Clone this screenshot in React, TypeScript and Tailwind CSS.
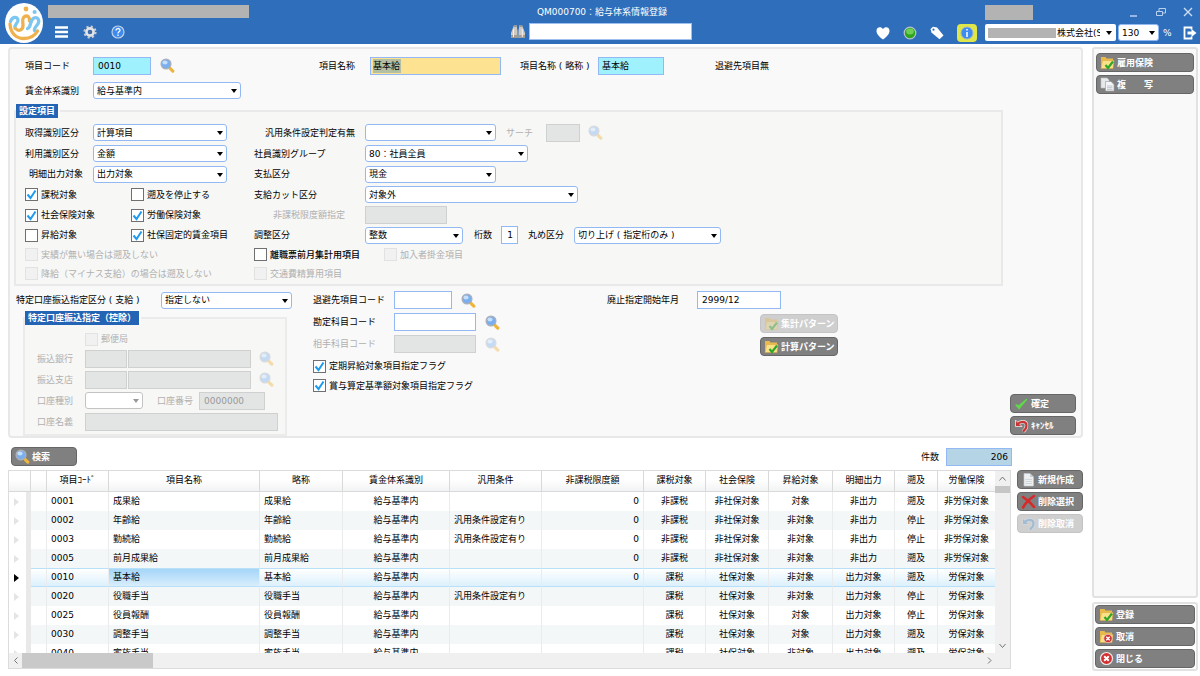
import { useId } from "react";
import clsx from "clsx";

type IconProps = { className?: string };

function Logo() {
    return (
        <svg viewBox="0 0 38 40" className="h-10 w-[38px] shrink-0">
            <ellipse cx="19" cy="20" rx="19" ry="20" fill="#fff" />
            <circle cx="21" cy="6" r="2.4" fill="#efb04e" />
            <circle cx="29.6" cy="9" r="2.1" fill="#7cc7f2" />
            <g fill="none" strokeWidth="3.3" strokeLinecap="round">
                <path d="M5 21c.5 9.500 6.500 14.500 14 14.500 6 0 11-3 13.500-7.500" stroke="#efb04e" />
                <path d="M5.500 18.500c1.500-5 7-5.500 7.500-1.500.3 3-4 4.500-3 8" stroke="#7cc7f2" />
                <path d="M10.500 25.500c3 3.500 7.500 1.500 7.500-3 0-3.500-1.500-7 1.500-9 3-1.500 5.500.5 5 4.500" stroke="#efb04e" />
                <path d="M22.500 25.500c4-1 2-8.500 6.500-10.500 4.500-1.500 6 3 3.500 6.500-1.500 2-3.500 3.500-3 6" stroke="#7cc7f2" />
            </g>
        </svg>
    );
}

function SearchIcon({ className }: IconProps) {
    return (
        <svg viewBox="0 0 15 15" className={clsx("h-[15px] w-[15px] shrink-0", className)}>
            <circle cx="6" cy="6" r="4.8" fill="#79aef0" stroke="#a9b0bb" strokeWidth="1.500" />
            <ellipse cx="5" cy="4.500" rx="2.600" ry="2" fill="#c3dffb" />
            <path d="M9.500 9.500l1.300 1.300" stroke="#8a8f98" strokeWidth="1.600" />
            <path d="M10.500 10.800l2.300 2.300" stroke="#eeb53a" strokeWidth="3.200" strokeLinecap="round" />
        </svg>
    );
}

function Folder() {
    return (
        <>
            <path d="M1 2h4.500l1 1.500H13V13H1z" fill="#e9b94c" />
            <path d="M2.500 5.500H14L13 13.500H1z" fill="#fbe08a" stroke="#d9a436" strokeWidth=".5" />
        </>
    );
}

function FolderCheckIcon({ className }: IconProps) {
    return (
        <svg viewBox="0 0 15 15" className={clsx("h-[15px] w-[15px] shrink-0", className)}>
            <Folder />
            <path d="M5.500 10l2.500 3 5-6.500" fill="none" stroke="#2fa82a" strokeWidth="2.200" />
        </svg>
    );
}

function FolderCancelIcon({ className }: IconProps) {
    return (
        <svg viewBox="0 0 15 15" className={clsx("h-[15px] w-[15px] shrink-0", className)}>
            <Folder />
            <circle cx="9" cy="9.500" r="4.200" fill="#cf3535" stroke="#e9dede" strokeWidth=".7" />
            <path d="M7.300 7.800l3.400 3.400M10.700 7.800l-3.400 3.400" stroke="#fff" strokeWidth="1.300" />
        </svg>
    );
}

function CopyIcon({ className }: IconProps) {
    return (
        <svg viewBox="0 0 15 15" className={clsx("h-[15px] w-[15px] shrink-0", className)}>
            <path d="M1 1h6l2 2v8H1z" fill="#e6e8ea" stroke="#bfc3c7" strokeWidth=".6" />
            <path d="M5.500 4.500h5.500l3 3V14H5.500z" fill="#f4f5f6" stroke="#9da2a7" strokeWidth=".7" />
            <path d="M7 9h5.500M7 10.700h5.500M7 12.400h5.500" stroke="#aab0b6" strokeWidth=".7" />
        </svg>
    );
}

function PageIcon({ className }: IconProps) {
    return (
        <svg viewBox="0 0 15 15" className={clsx("h-[15px] w-[15px] shrink-0", className)}>
            <path d="M3 1.500h6l3.500 3.500v9H3z" fill="#edf0f1" stroke="#c5c9cc" strokeWidth=".6" />
            <path d="M9 1.500V5h3.500" fill="#c9ced2" />
            <path d="M4.500 7.500h6.500M4.500 9.500h6.500M4.500 11.500h6.500" stroke="#c4cacf" strokeWidth=".7" />
        </svg>
    );
}

function CheckIcon({ className }: IconProps) {
    return (
        <svg viewBox="0 0 15 15" className={clsx("h-[15px] w-[15px] shrink-0", className)}>
            <path d="M2 9l3 3.500L12.500 3.500 5 9.800z" fill="#5fd84a" stroke="#5fd84a" strokeWidth="1.300" strokeLinejoin="round" />
        </svg>
    );
}

function UndoIcon({ className }: IconProps) {
    return (
        <svg viewBox="0 0 15 15" className={clsx("h-[15px] w-[15px] shrink-0", className)}>
            <path d="M3 6.500c4-4 9.500-3.500 9.500 1 0 2.500-1.500 4.500-3.500 6" fill="none" stroke="#eee" strokeWidth="3.400" />
            <path d="M1.500 2v6.500H8z" fill="currentColor" stroke="#eee" strokeWidth=".8" />
            <path d="M3 6.500c4-4 9.500-3.500 9.500 1 0 2.500-1.500 4.500-3.500 6" fill="none" stroke="currentColor" strokeWidth="2.200" />
        </svg>
    );
}

function DeleteIcon({ className }: IconProps) {
    return (
        <svg viewBox="0 0 15 15" className={clsx("h-[15px] w-[15px] shrink-0", className)}>
            <path d="M2 3c4 2.500 8 6 11 10M13 2C8.500 5 4.500 9 2 13.500" fill="none" stroke="#d62a2a" strokeWidth="2.600" strokeLinecap="round" />
        </svg>
    );
}

function CloseIcon({ className }: IconProps) {
    return (
        <svg viewBox="0 0 15 15" className={clsx("h-[15px] w-[15px] shrink-0", className)}>
            <circle cx="7.500" cy="7.500" r="6" fill="#d22f2f" stroke="#ececec" strokeWidth="1.200" />
            <path d="M5.200 5.200l4.600 4.600M9.800 5.200L5.200 9.800" stroke="#fff" strokeWidth="2" />
        </svg>
    );
}

function MenuIcon() {
    return (
        <svg viewBox="0 0 14 12" className="h-3 w-3.5">
            <path d="M0 1.500h13M0 6h13M0 10.500h13" stroke="#fff" strokeWidth="2.400" />
        </svg>
    );
}

function GearIcon() {
    return (
        <svg viewBox="0 0 14 14" className="h-3.5 w-3.5">
            <circle cx="7" cy="7" r="5.600" fill="none" stroke="#c9ccd0" strokeWidth="2" strokeDasharray="2.200 2.200" />
            <circle cx="7" cy="7" r="3.600" fill="none" stroke="#e3e4e6" strokeWidth="2.600" />
            <circle cx="7" cy="7" r="1.600" fill="#4a6c96" />
        </svg>
    );
}

function HelpIcon() {
    return (
        <svg viewBox="0 0 14 14" className="h-3.5 w-3.5">
            <circle cx="7" cy="7" r="6" fill="#3d8af0" stroke="#c3d2e6" strokeWidth="1.200" />
            <path d="M5 5.500c0-2.600 4-2.600 4-.2 0 1.600-2 1.500-2 3.200M7 9.600v1.400" fill="none" stroke="#fff" strokeWidth="1.300" />
        </svg>
    );
}

function BinocularsIcon() {
    return (
        <svg viewBox="0 0 16 16" className="h-4 w-4 shrink-0">
            <path d="M4 1h2.500l1 6v7H1V9z" fill="#cfc9c2" />
            <path d="M12 1H9.500l-1 6v7H15V9z" fill="#cfc9c2" />
            <path d="M4 1h2.500v2H4zM9.500 1H12v2H9.500z" fill="#9a9590" />
            <path d="M1 11h6.500v3H1zM8.500 11H15v3H8.500z" fill="#a39d96" />
            <path d="M3.500 5v8M12.300 5v8" stroke="#f3f0ec" />
        </svg>
    );
}

function HeartIcon() {
    return (
        <svg viewBox="0 0 14 14" className="h-3.5 w-3.5">
            <path d="M7 13.500C2 9.500 .5 7.500.5 4.700.5 1 5.200.2 7 3.200 8.800.2 13.500 1 13.500 4.700c0 2.800-1.500 4.800-6.500 8.800z" fill="#fff" />
        </svg>
    );
}

function StatusIcon() {
    return (
        <svg viewBox="0 0 14 14" className="h-3.5 w-3.5">
            <circle cx="7" cy="7" r="5.800" fill="#2fa51e" stroke="#b9c2cf" strokeWidth="1.200" />
            <ellipse cx="7" cy="5.500" rx="3.800" ry="3" fill="#6fce55" />
        </svg>
    );
}

function TagIcon() {
    return (
        <svg viewBox="0 0 14 14" className="h-3.5 w-3.5">
            <path d="M.5 3L3 .8l4 .7 6.500 8-4 3.800L1.500 6.500z" fill="#fff" />
            <circle cx="3.500" cy="3.700" r="1.100" fill="#2f6ebb" />
        </svg>
    );
}

function InfoIcon() {
    return (
        <svg viewBox="0 0 14 14" className="h-3.5 w-3.5">
            <circle cx="7" cy="7" r="6" fill="#3f8cf0" stroke="#9cb2cc" />
            <path d="M7 6v5M7 3v1.600" stroke="#fff" strokeWidth="1.500" />
        </svg>
    );
}

function ExitIcon() {
    return (
        <svg viewBox="0 0 14 14" className="h-3.5 w-3.5">
            <path d="M8.500 3.500V1.500H1.500v11h7v-2" fill="none" stroke="#fff" strokeWidth="1.800" />
            <path d="M4.500 5.500H8.500V3l5 4-5 4V8.500h-4z" fill="#fff" />
        </svg>
    );
}

type ActionButtonProps = {
    icon: React.ElementType;
    label: string;
    disabled?: boolean;
    className?: string;
    iconClassName?: string;
};

function ActionButton({ icon: Icon, label, disabled, className, iconClassName }: ActionButtonProps) {
    return (
        <button
            type="button"
            disabled={disabled}
            className={clsx(
                "flex h-[19px] shrink-0 items-center gap-0.5 rounded-[4px] border pl-[3px] font-bold whitespace-pre text-white",
                disabled ? "border-[#c4c4c4] bg-[#cfcfcf]" : "border-[#666] bg-[#808080]",
                className,
            )}
        >
            <Icon className={clsx(iconClassName, disabled && "opacity-40")} />
            {label}
        </button>
    );
}

function SearchButton({ disabled, className }: { disabled?: boolean; className?: string }) {
    return (
        <button type="button" aria-label="検索" disabled={disabled} className={clsx("shrink-0", disabled && "opacity-40", className)}>
            <SearchIcon />
        </button>
    );
}

type SelectProps = { id?: string; label?: string; value: string; className?: string; disabled?: boolean };

function Select({ id, label, value, className, disabled }: SelectProps) {
    return (
        <span className={clsx("relative h-[17px] shrink-0", className)}>
            <select
                id={id}
                aria-label={label}
                disabled={disabled}
                className={clsx(
                    "block h-full w-full appearance-none rounded-[3px] border bg-white pr-3 pl-[3px]",
                    disabled ? "border-[#c3c3c3]" : "border-[#93b9f5]",
                )}
            >
                <option>{value}</option>
            </select>
            <svg viewBox="0 0 6 4" className="pointer-events-none absolute top-[7px] right-1 h-1 w-1.5">
                <path d="M0 0h6L3 4z" fill={disabled ? "#999" : "#000"} />
            </svg>
        </span>
    );
}

type TextBoxProps = { id?: string; label?: string; value?: string; className?: string; disabled?: boolean };

function TextBox({ id, label, value = "", className, disabled }: TextBoxProps) {
    return (
        <input
            id={id}
            aria-label={label}
            defaultValue={value}
            disabled={disabled}
            className={clsx(
                "h-[18px] min-w-0 shrink-0 border",
                disabled ? "border-[#cfd1d1] bg-[#e3e5e4] px-1 text-[#999]" : "border-[#93b9f5]",
                className,
            )}
        />
    );
}

type FieldProps = { label: string; value: string; labelClass: string; selectClass: string; disabled?: boolean };

function SelectField({ label, value, labelClass, selectClass, disabled }: FieldProps) {
    const id = useId();
    return (
        <>
            <label htmlFor={id} className={clsx("shrink-0", labelClass)}>
                {label}
            </label>
            <Select id={id} value={value} className={selectClass} disabled={disabled} />
        </>
    );
}

type TextFieldProps = { label: string; value?: string; labelClass: string; inputClass: string; disabled?: boolean };

function TextField({ label, value, labelClass, inputClass, disabled }: TextFieldProps) {
    const id = useId();
    return (
        <>
            <label htmlFor={id} className={clsx("shrink-0", disabled && "text-[#b0b0b0]", labelClass)}>
                {label}
            </label>
            <TextBox id={id} value={value} className={inputClass} disabled={disabled} />
        </>
    );
}

type CheckProps = { label: string; checked?: boolean; disabled?: boolean; className?: string };

function Check({ label, checked, disabled, className }: CheckProps) {
    return (
        <label className={clsx("relative flex shrink-0 items-center gap-[3px]", disabled && "text-[#b0b0b0]", className)}>
            <input
                type="checkbox"
                defaultChecked={checked}
                disabled={disabled}
                className={clsx(
                    "peer h-[13px] w-[13px] shrink-0 appearance-none border",
                    disabled ? "border-[#e2e2e2] bg-[#f1f1f1]" : "border-[#707070] bg-white",
                )}
            />
            <svg viewBox="0 0 13 13" className="pointer-events-none absolute left-0 hidden h-[13px] w-[13px] peer-checked:block">
                <path d="M2.500 6.500l3 3.500 5-7.500" fill="none" stroke="#1e9bf0" strokeWidth="2" />
            </svg>
            {label}
        </label>
    );
}

function TopBar() {
    return (
        <header className="flex h-11 shrink-0 bg-[#2f6ebb] text-white">
            <div className="flex flex-1 gap-[5px] pt-[3px] pl-[5px]">
                <Logo />
                <div className="pt-[2px]">
                    <div className="h-[13px] w-[201px] bg-[#b3b3b3]" />
                    <nav className="mt-[7px] flex items-center gap-3.5 pl-[7px]">
                        <button type="button" aria-label="メニュー"><MenuIcon /></button>
                        <button type="button" aria-label="設定"><GearIcon /></button>
                        <button type="button" aria-label="ヘルプ"><HelpIcon /></button>
                    </nav>
                </div>
            </div>

            <div className="flex w-[182px] flex-col items-center">
                <h1 className="h-[23px] pl-0.5 leading-[24px]">QM000700：給与体系情報登録</h1>
                <div className="flex w-full items-center gap-[3px]">
                    <BinocularsIcon />
                    <input aria-label="メニュー検索" className="h-[17px] min-w-0 flex-1 border border-[#9dc0f0] bg-white px-1 text-black" />
                </div>
            </div>

            <div className="flex flex-1 flex-col items-end pr-[3px]">
                <div className="flex h-[23px] items-start pt-[5px]">
                    <div className="h-[15px] w-12 bg-[#b3b3b3]" />
                    <div className="ml-24 flex items-center gap-4 pr-1">
                        <button type="button" aria-label="最小化">
                            <svg viewBox="0 0 10 14" className="h-3.5 w-2.5"><path d="M1 11h7" stroke="#b9d0ef" strokeWidth="1.500" /></svg>
                        </button>
                        <button type="button" aria-label="元に戻す">
                            <svg viewBox="0 0 12 14" className="h-3.5 w-3">
                                <path d="M1.500 6.500h6v4h-6zM4 6.500v-3h6.500v4.500h-3" fill="none" stroke="#b9d0ef" />
                            </svg>
                        </button>
                        <button type="button" aria-label="閉じる">
                            <svg viewBox="0 0 10 14" className="h-3.5 w-2.5"><path d="M1 3l8 8M9 3l-8 8" stroke="#cfe0f6" strokeWidth="1.300" /></svg>
                        </button>
                    </div>
                </div>
                <div className="flex h-[19px] items-center">
                    <div className="flex items-center gap-[13px] pr-2">
                        <button type="button" aria-label="お気に入り"><HeartIcon /></button>
                        <button type="button" aria-label="接続状態"><StatusIcon /></button>
                        <button type="button" aria-label="タグ"><TagIcon /></button>
                        <button type="button" aria-label="情報" className="flex h-[18px] w-5 items-center justify-center rounded-[4px] bg-[#dfe64a]">
                            <InfoIcon />
                        </button>
                    </div>
                    <div className="relative h-[17px] w-[131px] rounded-[2px] bg-white text-black">
                        <select aria-label="会社" className="h-full w-full appearance-none pr-4 pl-[72px]">
                            <option>株式会社(S</option>
                        </select>
                        <div className="pointer-events-none absolute top-1 left-[3px] h-2.5 w-[68px] bg-[#b3b3b3]" />
                        <svg viewBox="0 0 6 4" className="pointer-events-none absolute top-[7px] right-1 h-1 w-1.5"><path d="M0 0h6L3 4z" /></svg>
                    </div>
                    <Select label="表示倍率" value="130" className="ml-0.5 w-[41px] text-black" />
                    <span className="w-[24px] pl-1">%</span>
                    <button type="button" aria-label="ログアウト"><ExitIcon /></button>
                </div>
            </div>
        </header>
    );
}

function Legend({ children }: { children: React.ReactNode }) {
    return (
        <legend className="h-3.5 bg-[#2464b4] px-[3px] leading-3.5 font-bold text-white shadow-[2px_0_0_#fafafa]">{children}</legend>
    );
}

function SettingsGroup() {
    return (
        <fieldset className="mt-[5px] mr-[78px] ml-1 border-2 border-[#e9e9e9] bg-[#f7f7f6] pb-px text-black">
            <Legend>設定項目</Legend>
            <div className="pt-1 pl-[9px]">
                <div className="flex h-[21px] items-center">
                    <SelectField label="取得識別区分" value="計算項目" labelClass="w-[68px]" selectClass="w-[134px]" />
                    <SelectField label="汎用条件設定判定有無" value="" labelClass="ml-[27px] w-[111px] pl-[11px]" selectClass="w-[131px]" />
                    <TextField label="サーチ" disabled labelClass="ml-2.5 w-10" inputClass="w-[34px]" />
                    <SearchButton disabled className="ml-2" />
                </div>
                <div className="flex h-[21px] items-center">
                    <SelectField label="利用識別区分" value="金額" labelClass="w-[68px]" selectClass="w-[134px]" />
                    <SelectField label="社員識別グループ" value="80：社員全員" labelClass="ml-[27px] w-[111px]" selectClass="w-[163px]" />
                </div>
                <div className="flex h-5 items-center">
                    <SelectField label="明細出力対象" value="出力対象" labelClass="w-[68px] pl-1" selectClass="w-[134px]" />
                    <SelectField label="支払区分" value="現金" labelClass="ml-[27px] w-[111px]" selectClass="w-[131px]" />
                </div>
                <div className="flex h-[21px] items-center">
                    <Check label="課税対象" checked className="w-[106px]" />
                    <Check label="遡及を停止する" className="w-[123px]" />
                    <SelectField label="支給カット区分" value="対象外" labelClass="w-[111px]" selectClass="w-[213px]" />
                </div>
                <div className="flex h-5 items-center">
                    <Check label="社会保険対象" checked className="w-[106px]" />
                    <Check label="労働保険対象" checked className="w-[123px]" />
                    <TextField label="非課税限度額指定" disabled labelClass="w-[111px] pl-[19px]" inputClass="w-[82px]" />
                </div>
                <div className="flex h-5 items-center">
                    <Check label="昇給対象" className="w-[106px]" />
                    <Check label="社保固定的賃金項目" checked className="w-[123px]" />
                    <SelectField label="調整区分" value="整数" labelClass="w-[111px]" selectClass="w-[98px]" />
                    <TextField label="桁数" value="1" labelClass="ml-[11px] w-[27px]" inputClass="w-[17px] bg-white pr-1 text-right" />
                    <SelectField label="丸め区分" value="切り上げ ( 指定桁のみ )" labelClass="ml-2.5 w-[46px]" selectClass="w-[147px]" />
                </div>
                <div className="flex h-[19px] items-center">
                    <Check label="実績が無い場合は遡及しない" disabled className="w-[229px]" />
                    <Check label="離職票前月集計用項目" className="w-[130px] font-medium" />
                    <Check label="加入者掛金項目" disabled />
                </div>
                <div className="flex h-[19px] items-center">
                    <Check label="降給（マイナス支給）の場合は遡及しない" disabled className="w-[229px]" />
                    <Check label="交通費精算用項目" disabled />
                </div>
            </div>
        </fieldset>
    );
}

function DeductionTransferGroup() {
    return (
        <fieldset disabled className="mt-0.5 ml-[7px] w-[264px] border-2 border-[#ebebeb] bg-[#f7f7f6] pb-0.5 text-[#b0b0b0]">
            <Legend>特定口座振込指定（控除）</Legend>
            <div className="pt-[5px] pl-3">
                <div className="flex h-[18px] items-center pl-12">
                    <Check label="郵便局" disabled />
                </div>
                <div className="flex h-[21px] items-center">
                    <TextField label="振込銀行" disabled labelClass="w-12" inputClass="w-[42px]" />
                    <TextBox label="振込銀行名" disabled className="ml-px w-[123px]" />
                    <SearchButton disabled className="ml-2" />
                </div>
                <div className="flex h-[21px] items-center">
                    <TextField label="振込支店" disabled labelClass="w-12" inputClass="w-[42px]" />
                    <TextBox label="振込支店名" disabled className="ml-px w-[123px]" />
                    <SearchButton disabled className="ml-2" />
                </div>
                <div className="flex h-[21px] items-center">
                    <SelectField label="口座種別" value="" disabled labelClass="w-12" selectClass="w-[58px]" />
                    <TextField label="口座番号" value="0000000" disabled labelClass="ml-3.5 w-[42px]" inputClass="w-[66px]" />
                </div>
                <div className="flex h-[21px] items-center">
                    <TextField label="口座名義" disabled labelClass="w-12" inputClass="w-[193px]" />
                </div>
            </div>
        </fieldset>
    );
}

function ItemForm() {
    return (
        <form className="rounded-[4px] border-2 border-[#e8e8e8] bg-[#f9f9f9] pt-2">
            <div className="flex h-[17px] items-center pl-[15px]">
                <TextField label="項目コード" value="0010" labelClass="w-[68px]" inputClass="w-[58px] bg-[#9ff2fd] px-1" />
                <SearchButton className="ml-[9px]" />
                <TextField
                    label="項目名称"
                    value="基本給"
                    labelClass="ml-[144px] w-[51px]"
                    inputClass="w-[131px] bg-[#fce291] bg-[linear-gradient(#b3bfa2,#b3bfa2)] bg-[length:28px_14px] bg-[position:2px_center] bg-no-repeat px-0.5"
                />
                <TextField label="項目名称 ( 略称 )" value="基本給" labelClass="ml-[19px] w-[78px]" inputClass="w-[66px] bg-[#9ff2fd] px-[3px]" />
                <span className="ml-[51px]">退避先項目無</span>
            </div>
            <div className="mt-2 flex h-[17px] items-center pl-[15px]">
                <SelectField label="賃金体系識別" value="給与基準内" labelClass="w-[68px]" selectClass="w-[148px]" />
            </div>

            <SettingsGroup />

            <div className="flex pl-1.5">
                <div className="w-[297px] shrink-0 pt-[5px]">
                    <div className="flex h-[18px] items-center">
                        <SelectField label="特定口座振込指定区分 ( 支給 )" value="指定しない" labelClass="w-[145px]" selectClass="w-[131px]" />
                    </div>
                    <DeductionTransferGroup />
                </div>

                <div className="w-[294px] shrink-0 pt-[3px]">
                    <div className="flex h-[22px] items-center">
                        <TextField label="退避先項目コード" labelClass="w-[81px]" inputClass="w-[58px] bg-white px-1" />
                        <SearchButton className="ml-[9px]" />
                    </div>
                    <div className="flex h-[22px] items-center">
                        <TextField label="勘定科目コード" labelClass="w-[81px]" inputClass="w-[82px] bg-white px-1" />
                        <SearchButton className="ml-[9px]" />
                    </div>
                    <div className="flex h-[22px] items-center">
                        <TextField label="相手科目コード" disabled labelClass="w-[81px]" inputClass="w-[82px]" />
                        <SearchButton disabled className="ml-[9px]" />
                    </div>
                    <Check label="定期昇給対象項目指定フラグ" checked className="h-[22px]" />
                    <Check label="賞与算定基準額対象項目指定フラグ" checked className="h-[17px]" />
                </div>

                <div className="pt-[3px]">
                    <div className="flex h-[22px] items-center">
                        <TextField label="廃止指定開始年月" value="2999/12" labelClass="w-[90px]" inputClass="w-[84px] bg-white px-1" />
                    </div>
                    <div className="mt-[3px] flex flex-col gap-1 pl-[153px]">
                        <ActionButton icon={FolderCheckIcon} label="集計パターン" disabled className="w-[78px]" />
                        <ActionButton icon={FolderCheckIcon} label="計算パターン" className="w-[78px]" />
                    </div>
                </div>

                <div className="mr-[5px] mb-px ml-auto flex flex-col gap-[3px] self-end">
                    <ActionButton icon={CheckIcon} label="確定" className="w-[66px]" />
                    <ActionButton icon={UndoIcon} label="ｷｬﾝｾﾙ" className="w-[66px]" iconClassName="text-[#c93434]" />
                </div>
            </div>
        </form>
    );
}

const columns = [
    { title: "", width: "w-[22px]" },
    { title: "", width: "w-4" },
    { title: "項目ｺｰﾄﾞ", width: "w-[62px]" },
    { title: "項目名称", width: "w-auto" },
    { title: "略称", width: "w-[83px]" },
    { title: "賃金体系識別", width: "w-[107px]" },
    { title: "汎用条件", width: "w-[92px]" },
    { title: "非課税限度額", width: "w-[102px]" },
    { title: "課税対象", width: "w-[62px]" },
    { title: "社会保険", width: "w-[63px]" },
    { title: "昇給対象", width: "w-16" },
    { title: "明細出力", width: "w-[62px]" },
    { title: "遡及", width: "w-[43px]" },
    { title: "労働保険", width: "w-[57px]" },
];

// code, name, condition, tax-free limit, tax, social insurance, raise, output, retroactive, labour insurance
const rows = [
    ["0001", "成果給", "", "0", "非課税", "非社保対象", "対象", "非出力", "遡及", "非労保対象"],
    ["0002", "年齢給", "汎用条件設定有り", "0", "非課税", "非社保対象", "非対象", "非出力", "停止", "非労保対象"],
    ["0003", "勤続給", "汎用条件設定有り", "0", "非課税", "非社保対象", "非対象", "非出力", "停止", "非労保対象"],
    ["0005", "前月成果給", "", "0", "非課税", "非社保対象", "非対象", "非出力", "遡及", "非労保対象"],
    ["0010", "基本給", "", "0", "課税", "社保対象", "非対象", "出力対象", "遡及", "労保対象"],
    ["0020", "役職手当", "汎用条件設定有り", "", "課税", "社保対象", "非対象", "出力対象", "停止", "労保対象"],
    ["0025", "役員報酬", "", "", "課税", "社保対象", "対象", "出力対象", "停止", "労保対象"],
    ["0030", "調整手当", "", "", "課税", "社保対象", "対象", "出力対象", "遡及", "労保対象"],
    ["0040", "家族手当", "", "", "課税", "社保対象", "非対象", "出力対象", "遡及", "労保対象"],
];

const selectedCode = "0010";

function ItemTable() {
    return (
        <div className="flex min-h-0 flex-1 flex-col border border-[#dcdcdc] bg-white">
            <div className="flex min-h-0 flex-1">
                <div className="min-w-0 flex-1 overflow-hidden">
                    <table className="w-full table-fixed border-separate border-spacing-0">
                        <thead>
                            <tr className="h-[21px] bg-linear-to-b from-white from-40% to-[#f1f2f3]">
                                {columns.map((column, index) => (
                                    <th
                                        key={index}
                                        className={clsx(
                                            "border-b border-[#d9d9d9] p-0 pb-[3px] font-normal",
                                            column.width,
                                            index < 13 && "border-r",
                                        )}
                                    >
                                        {column.title}
                                    </th>
                                ))}
                            </tr>
                        </thead>
                        <tbody>
                            {rows.map(([code, name, condition, limit, ...flags], index) => {
                                const selected = code === selectedCode;
                                const cell = clsx(
                                    "h-[19px] border-r-[#e9ebec] px-1 py-0",
                                    selected && "border-y border-y-[#b9e0f9] bg-linear-to-b from-white to-[#dcf0fc]",
                                    !selected && index % 2 === 1 && "bg-[#f3f7f8]",
                                );
                                return (
                                    <tr key={code} className="leading-none">
                                        <td className="h-[19px] border-r-[5px] border-[#e9e9e9] p-0 pl-[5px]">
                                            <svg viewBox="0 0 5 8" className="h-2 w-[5px]">
                                                <path d="M0 0l5 4-5 4z" fill={selected ? "#000" : "#e4e4e4"} />
                                            </svg>
                                        </td>
                                        <td className={clsx(cell, "border-r")} />
                                        <td className={clsx(cell, "border-r")}>{code}</td>
                                        <td className={clsx(cell, "border-r", selected && "from-[#a5d5f8]! to-[#d8eefc]!")}>{name}</td>
                                        <td className={clsx(cell, "border-r")}>{name}</td>
                                        <td className={clsx(cell, "border-r text-center")}>給与基準内</td>
                                        <td className={clsx(cell, "border-r")}>{condition}</td>
                                        <td className={clsx(cell, "border-r text-right")}>{limit}</td>
                                        {flags.map((flag, column) => (
                                            <td key={column} className={clsx(cell, "text-center", column < flags.length - 1 && "border-r")}>
                                                {flag}
                                            </td>
                                        ))}
                                    </tr>
                                );
                            })}
                        </tbody>
                    </table>
                </div>
                <div className="flex w-[15px] shrink-0 flex-col items-center bg-[#f0f0f0]">
                    <svg viewBox="0 0 15 15" className="h-[15px] w-[15px]"><path d="M4.500 9.500l3-3.500 3 3.500" fill="none" stroke="#777" /></svg>
                    <div className="h-[7px] w-full bg-[#c6c6c6]" />
                    <svg viewBox="0 0 15 15" className="mt-auto h-[15px] w-[15px]"><path d="M4.500 6l3 3.500 3-3.500" fill="none" stroke="#777" /></svg>
                </div>
            </div>
            <div className="flex h-[15px] shrink-0 bg-[#f0f0f0] pr-3.5">
                <svg viewBox="0 0 13 15" className="h-[15px] w-[13px]"><path d="M8.500 4.500l-3 3 3 3" fill="none" stroke="#777" /></svg>
                <div className="w-[131px] bg-[#c9c9c9]" />
                <svg viewBox="0 0 13 15" className="ml-auto h-[15px] w-[13px]"><path d="M5 4.500l3 3-3 3" fill="none" stroke="#777" /></svg>
            </div>
        </div>
    );
}

export default function App() {
    return (
        <div className="flex h-screen flex-col overflow-hidden bg-white font-['DejaVu_Sans','Noto_Sans_CJK_JP',sans-serif] text-[9px] leading-3 whitespace-nowrap text-black">
            <TopBar />
            <div className="flex min-h-0 flex-1 gap-[9px] pt-[3px] pr-0.5 pb-[5px] pl-2">
                <main className="flex min-w-0 flex-1 flex-col pb-0.5">
                    <ItemForm />

                    <div className="mt-[9px] flex items-center pr-[71px] pl-[3px]">
                        <ActionButton icon={SearchIcon} label="検索" className="w-[66px]" />
                        <div className="ml-auto flex items-center">
                            <TextField label="件数" value="206" labelClass="w-[25px]" inputClass="w-[66px] bg-[#b5d5e6] pr-[3px] text-right" />
                        </div>
                    </div>

                    <div className="mt-1 flex min-h-0 flex-1 gap-1.5">
                        <ItemTable />
                        <div className="flex flex-col gap-[3px]">
                            <ActionButton icon={PageIcon} label="新規作成" className="w-[66px]" />
                            <ActionButton icon={DeleteIcon} label="削除選択" className="w-[66px]" />
                            <ActionButton icon={UndoIcon} label="削除取消" disabled className="w-[66px]" iconClassName="text-[#5aa0dc]" />
                        </div>
                    </div>
                </main>

                <aside className="flex w-[106px] shrink-0 flex-col gap-1">
                    <div className="flex flex-1 flex-col gap-[3px] rounded-[3px] border-2 border-[#e2e2e2] bg-[#f9f9f9] px-0.5 pt-1">
                        <ActionButton icon={FolderCheckIcon} label="雇用保険" />
                        <ActionButton icon={CopyIcon} label="複　　写" />
                    </div>
                    <div className="flex flex-col gap-[3px] rounded-[3px] border-2 border-[#e2e2e2] bg-white px-px py-px">
                        <ActionButton icon={FolderCheckIcon} label="登録" />
                        <ActionButton icon={FolderCancelIcon} label="取消" />
                        <ActionButton icon={CloseIcon} label="閉じる" />
                    </div>
                </aside>
            </div>
        </div>
    );
}
